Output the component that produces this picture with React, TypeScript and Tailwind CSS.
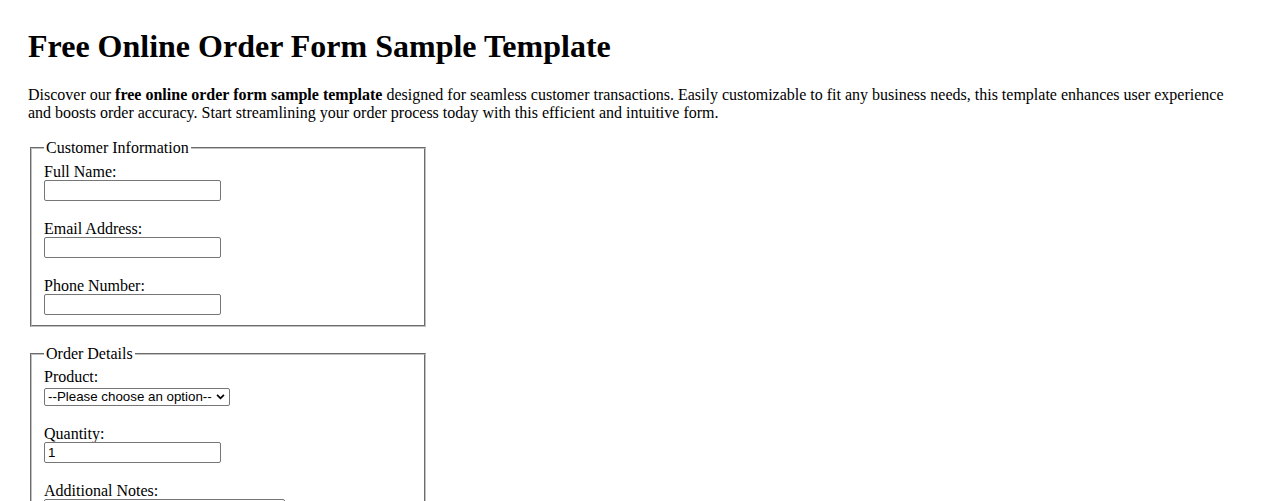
import { ReactNode } from 'react'

const serif = "font-['Liberation_Serif','Times_New_Roman',serif]"
const control =
  "block bg-white text-black border border-[#767676] rounded-[2px] text-[13.33px] leading-[15px] font-['Liberation_Sans',Arial,sans-serif]"

function Field({ label, children }: { label: string; children: ReactNode }) {
  return (
    <label className="flex flex-col items-start">
      <span className="leading-[17px]">{label}</span>
      {children}
    </label>
  )
}

function TextInput({ type = 'text', defaultValue }: { type?: string; defaultValue?: string }) {
  return <input type={type} defaultValue={defaultValue} className={`${control} w-[177px] h-[21px] px-[3px]`} />
}

function Section({ title, children }: { title: string; children: ReactNode }) {
  return (
    <fieldset className="mx-[2px] w-[396px] border-2 border-[#c0c0c0] [border-style:groove] px-[12px] pt-[5.6px] pb-[10px]">
      <legend className="px-[2px] leading-[normal]">{title}</legend>
      <div className="flex flex-col gap-[19px]">{children}</div>
    </fieldset>
  )
}

export default function App() {
  return (
    <div className={`${serif} bg-white text-black min-h-screen px-[28px] pt-[28px] pb-[40px] leading-[normal] text-[16px]`}>
      <h1 className="text-[32px] font-bold leading-[37px] mb-[21px]">Free Online Order Form Sample Template</h1>
      <p className="mb-[17px]">
        Discover our <strong className="font-bold">free online order form sample template</strong> designed for seamless
        customer transactions. Easily customizable to fit any business needs, this template enhances user experience and
        boosts order accuracy. Start streamlining your order process today with this efficient and intuitive form.
      </p>

      <form className="flex flex-col gap-[18px]">
        <Section title="Customer Information">
          <Field label="Full Name:">
            <TextInput />
          </Field>
          <Field label="Email Address:">
            <TextInput type="email" />
          </Field>
          <Field label="Phone Number:">
            <TextInput type="tel" />
          </Field>
        </Section>

        <Section title="Order Details">
          <Field label="Product:">
            <div className="relative mt-[3px]">
              <select
                defaultValue=""
                className={`${control} appearance-none w-[186px] h-[18px] leading-[16px] pl-[3px] pr-[16px] text-[13.6px]`}
              >
                <option value="">--Please choose an option--</option>
                <option value="widget">Widget</option>
                <option value="gadget">Gadget</option>
                <option value="gizmo">Gizmo</option>
              </select>
              <svg
                viewBox="0 0 10 7"
                className="pointer-events-none absolute right-[5px] top-[6px] w-[9px] h-[6px]"
                fill="none"
                stroke="black"
                strokeWidth="2"
              >
                <polyline points="1,1 5,5 9,1" />
              </svg>
            </div>
          </Field>
          <Field label="Quantity:">
            <TextInput type="number" defaultValue="1" />
          </Field>
          <Field label="Additional Notes:">
            <textarea rows={4} className={`${control} w-[241px] h-[66px] px-[3px] py-[2px] resize`} />
          </Field>
        </Section>

        <div>
          <button
            type="submit"
            className="border border-[#767676] rounded-[2px] bg-[#efefef] px-[6px] py-[1px] text-[13.33px] font-['Liberation_Sans',Arial,sans-serif]"
          >
            Submit Order
          </button>
        </div>
      </form>
    </div>
  )
}
